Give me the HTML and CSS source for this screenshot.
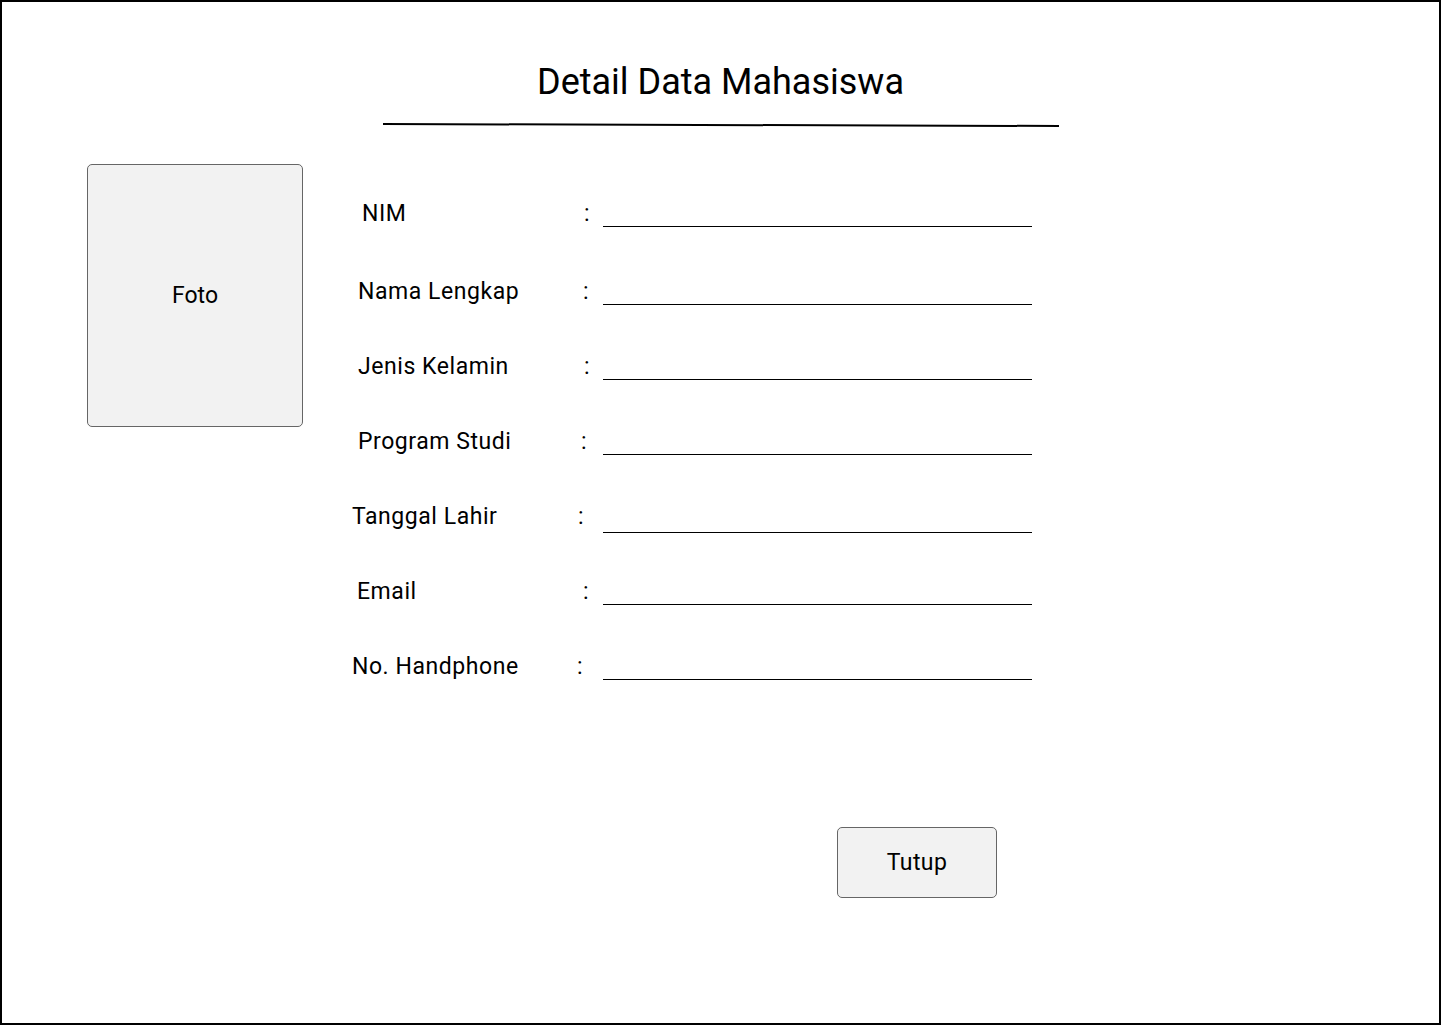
FILE: index.html
```html
<!DOCTYPE html>
<html lang="id">
<head>
<meta charset="utf-8">
<title>Detail Data Mahasiswa</title>
<link rel="stylesheet" href="styles.css">
</head>
<body>
<div class="frame">
  <header class="head">
    <h1 class="title">Detail Data Mahasiswa</h1>
    <svg class="rule" width="676" height="4" viewBox="0 0 676 4"><line x1="0" y1="1" x2="676" y2="3" stroke="#000" stroke-width="2"/></svg>
  </header>
  <main class="main">
    <div class="photo">Foto</div>
    <div class="fields">
      <div class="row row-nim"><span class="label">NIM</span><span class="colon">:</span><span class="line"></span></div>
      <div class="row row-nama"><span class="label">Nama Lengkap</span><span class="colon">:</span><span class="line"></span></div>
      <div class="row row-jk"><span class="label">Jenis Kelamin</span><span class="colon">:</span><span class="line"></span></div>
      <div class="row row-prodi"><span class="label">Program Studi</span><span class="colon">:</span><span class="line"></span></div>
      <div class="row row-tgl"><span class="label">Tanggal Lahir</span><span class="colon">:</span><span class="line"></span></div>
      <div class="row row-email"><span class="label">Email</span><span class="colon">:</span><span class="line"></span></div>
      <div class="row row-hp"><span class="label">No. Handphone</span><span class="colon">:</span><span class="line"></span></div>
    </div>
  </main>
  <div class="actions">
    <button class="btn" type="button">Tutup</button>
  </div>
</div>
</body>
</html>
```
FILE: styles.css
```css
* { box-sizing: border-box; }
html, body { margin: 0; padding: 0; background: #fff; }
body { font-family: Roboto, "Liberation Sans", sans-serif; color: #000; }

.frame {
  width: 1441px;
  height: 1025px;
  border: 2px solid #000;
  background: #fff;
}

.head { padding-top: 60px; }
.title {
  margin: 0;
  font-size: 36px;
  line-height: 40px;
  font-weight: 400;
  text-align: center;
}
.rule { display: block; margin: 21px 0 0 381px; }

.main {
  display: flex;
  align-items: flex-start;
  margin-top: 37px;
  padding-left: 85px;
}
.photo {
  width: 216px;
  height: 263px;
  border: 1px solid #666;
  border-radius: 5px;
  background: #f2f2f2;
  display: flex;
  align-items: center;
  justify-content: center;
  font-size: 23px;
}

.fields {
  margin-left: 47px;
  padding-top: 37px;
  display: flex;
  flex-direction: column;
  gap: 48px;
}
.row {
  --lx: 0px; --cx: 0px; --ly: 26px;
  display: grid;
  grid-template-columns: 225px 28px 429px;
  align-items: start;
  height: 27px;
  font-size: 23px;
  line-height: 26px;
}
.row-nim { --lx: 12px; --cx: 9px; margin-bottom: 3px; }
.row-nama { --lx: 8px; --cx: 8px; }
.row-jk { --lx: 8px; --cx: 9px; }
.row-prodi { --lx: 8px; --cx: 6px; }
.row-tgl { --lx: 2px; --cx: 3px; --ly: 29px; }
.row-email { --lx: 7px; --cx: 8px; }
.row-hp { --lx: 2px; --cx: 2px; }

.label { padding-left: var(--lx); white-space: nowrap; letter-spacing: 0.55px; }
.colon { padding-left: var(--cx); }
.line {
  display: block;
  height: var(--ly);
  border-bottom: 1px solid #000;
}

.actions { margin-top: 146px; padding-left: 835px; }
.btn {
  width: 160px;
  height: 71px;
  border: 1px solid #666;
  border-radius: 5px;
  background: #f2f2f2;
  font-family: Roboto, "Liberation Sans", sans-serif;
  font-size: 23px;
  letter-spacing: 0.4px;
  color: #000;
  padding: 0;
}
```
